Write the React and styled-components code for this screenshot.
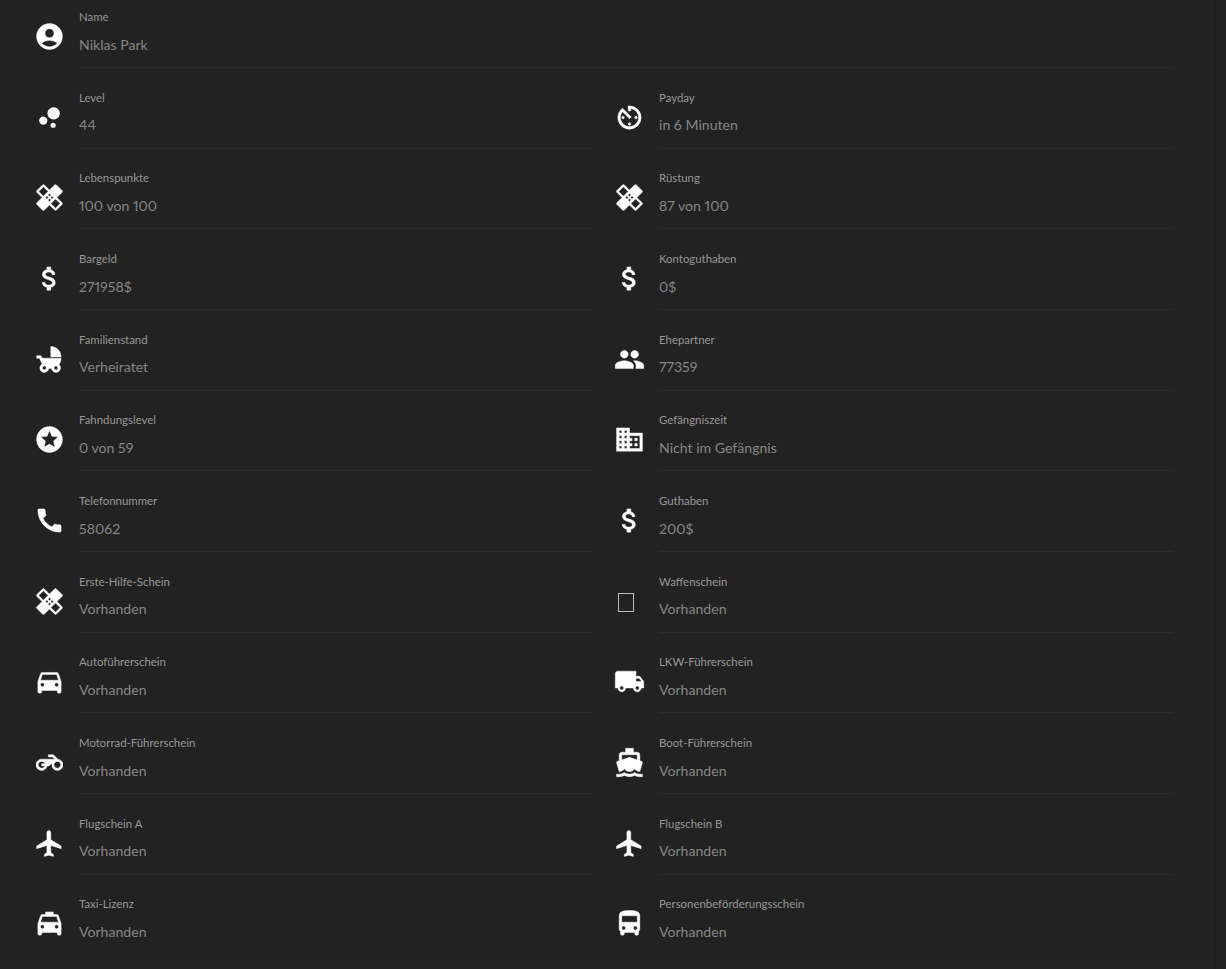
import React from 'react'
import styled, { createGlobalStyle } from 'styled-components'
import {
  MdAccountCircle, MdBubbleChart, MdAvTimer, MdHealing, MdAttachMoney, MdChildFriendly,
  MdPeople, MdStars, MdDomain, MdCall, MdDirectionsCar, MdLocalShipping,
  MdDirectionsBoat, MdFlight, MdLocalTaxi, MdDirectionsBus,
} from 'react-icons/md'

const Global = createGlobalStyle`
  html, body {
    margin: 0;
    background: #222222;
    overflow: hidden;
  }
  body {
    font-family: "Lato", "Noto Sans", sans-serif;
  }
`

const Page = styled.div`
  width: 1216px;
  height: 969px;
  box-sizing: border-box;
  border-right: 1px solid #1e1e1e;
  padding-left: 33.5px;
`

const Grid = styled.div`
  display: grid;
  grid-template-columns: 558.5px 559.5px;
  column-gap: 21.5px;
`

const Row = styled.div`
  display: flex;
  gap: 14.5px;
  grid-column: ${props => (props.$wide ? '1 / span 2' : 'auto')};
`

const IconSlot = styled.div`
  flex: 0 0 31px;
  height: 31px;
  margin-top: ${props => (props.$first ? '21px' : '33.67px')};
  color: #ffffff;
  display: flex;
  align-items: center;
  justify-content: center;
  font-size: 31px;

  path:not([fill='none']) {
    stroke: currentColor;
    stroke-width: 0.35px;
  }
`

const Tofu = styled.div`
  width: 14px;
  height: 17px;
  margin: 2px 6px 0 0;
  border: 1px solid #bcbcbc;
`

const Text = styled.div`
  flex: 1;
  box-sizing: border-box;
  height: ${props => (props.$first ? '68px' : '80.67px')};
  padding-top: ${props => (props.$first ? '10px' : '22.67px')};
  border-bottom: ${props => (props.$last ? 'none' : '1px solid #2a2a2d')};
`

const Label = styled.div`
  font-size: 11.4px;
  line-height: 14px;
  color: #979797;
`

const Value = styled.div`
  margin-top: 10.6px;
  font-size: 14.1px;
  line-height: 20px;
  font-variant-numeric: proportional-nums;
  color: #868686;
`

const MdMotorcycle = () => (
  <svg width="27" height="27" viewBox="0 0 24 24" fill="currentColor">
    <path d="M19.44 9.03L15.41 5H11v2h3.59l2 2H5c-2.8 0-5 2.2-5 5s2.2 5 5 5c2.46 0 4.45-1.69 4.9-4h1.65l2.77-2.77c-.21.54-.32 1.14-.32 1.77 0 2.8 2.2 5 5 5s5-2.2 5-5c0-2.65-1.97-4.77-4.56-4.97zM7.82 15C7.4 16.15 6.28 17 5 17c-1.63 0-3-1.37-3-3s1.37-3 3-3c1.28 0 2.4.85 2.82 2H5v2h2.82zM19 17c-1.66 0-3-1.34-3-3s1.34-3 3-3 3 1.34 3 3-1.34 3-3 3z" />
  </svg>
)

const rows = [
  [{ icon: MdAccountCircle, label: 'Name', value: 'Niklas Park' }],
  [
    { icon: MdBubbleChart, label: 'Level', value: '44' },
    { icon: MdAvTimer, label: 'Payday', value: 'in 6 Minuten' },
  ],
  [
    { icon: MdHealing, label: 'Lebenspunkte', value: '100 von 100' },
    { icon: MdHealing, label: 'Rüstung', value: '87 von 100' },
  ],
  [
    { icon: MdAttachMoney, label: 'Bargeld', value: '271958$' },
    { icon: MdAttachMoney, label: 'Kontoguthaben', value: '0$' },
  ],
  [
    { icon: MdChildFriendly, label: 'Familienstand', value: 'Verheiratet' },
    { icon: MdPeople, label: 'Ehepartner', value: '77359' },
  ],
  [
    { icon: MdStars, label: 'Fahndungslevel', value: '0 von 59' },
    { icon: MdDomain, label: 'Gefängniszeit', value: 'Nicht im Gefängnis' },
  ],
  [
    { icon: MdCall, label: 'Telefonnummer', value: '58062' },
    { icon: MdAttachMoney, label: 'Guthaben', value: '200$' },
  ],
  [
    { icon: MdHealing, label: 'Erste-Hilfe-Schein', value: 'Vorhanden' },
    { icon: null, label: 'Waffenschein', value: 'Vorhanden' },
  ],
  [
    { icon: MdDirectionsCar, label: 'Autoführerschein', value: 'Vorhanden' },
    { icon: MdLocalShipping, label: 'LKW-Führerschein', value: 'Vorhanden' },
  ],
  [
    { icon: MdMotorcycle, label: 'Motorrad-Führerschein', value: 'Vorhanden' },
    { icon: MdDirectionsBoat, label: 'Boot-Führerschein', value: 'Vorhanden' },
  ],
  [
    { icon: MdFlight, label: 'Flugschein A', value: 'Vorhanden' },
    { icon: MdFlight, label: 'Flugschein B', value: 'Vorhanden' },
  ],
  [
    { icon: MdLocalTaxi, label: 'Taxi-Lizenz', value: 'Vorhanden' },
    { icon: MdDirectionsBus, label: 'Personenbeförderungsschein', value: 'Vorhanden' },
  ],
]

const App = () => (
  <Page>
    <Global />
    <Grid>
      {rows.map((cells, r) =>
        cells.map(({ icon: Icon, label, value }) => (
          <Row key={label} $wide={cells.length === 1}>
            <IconSlot $first={r === 0}>{Icon ? <Icon /> : <Tofu />}</IconSlot>
            <Text $first={r === 0} $last={r === rows.length - 1}>
              <Label>{label}</Label>
              <Value>{value}</Value>
            </Text>
          </Row>
        ))
      )}
    </Grid>
  </Page>
)

export default App
